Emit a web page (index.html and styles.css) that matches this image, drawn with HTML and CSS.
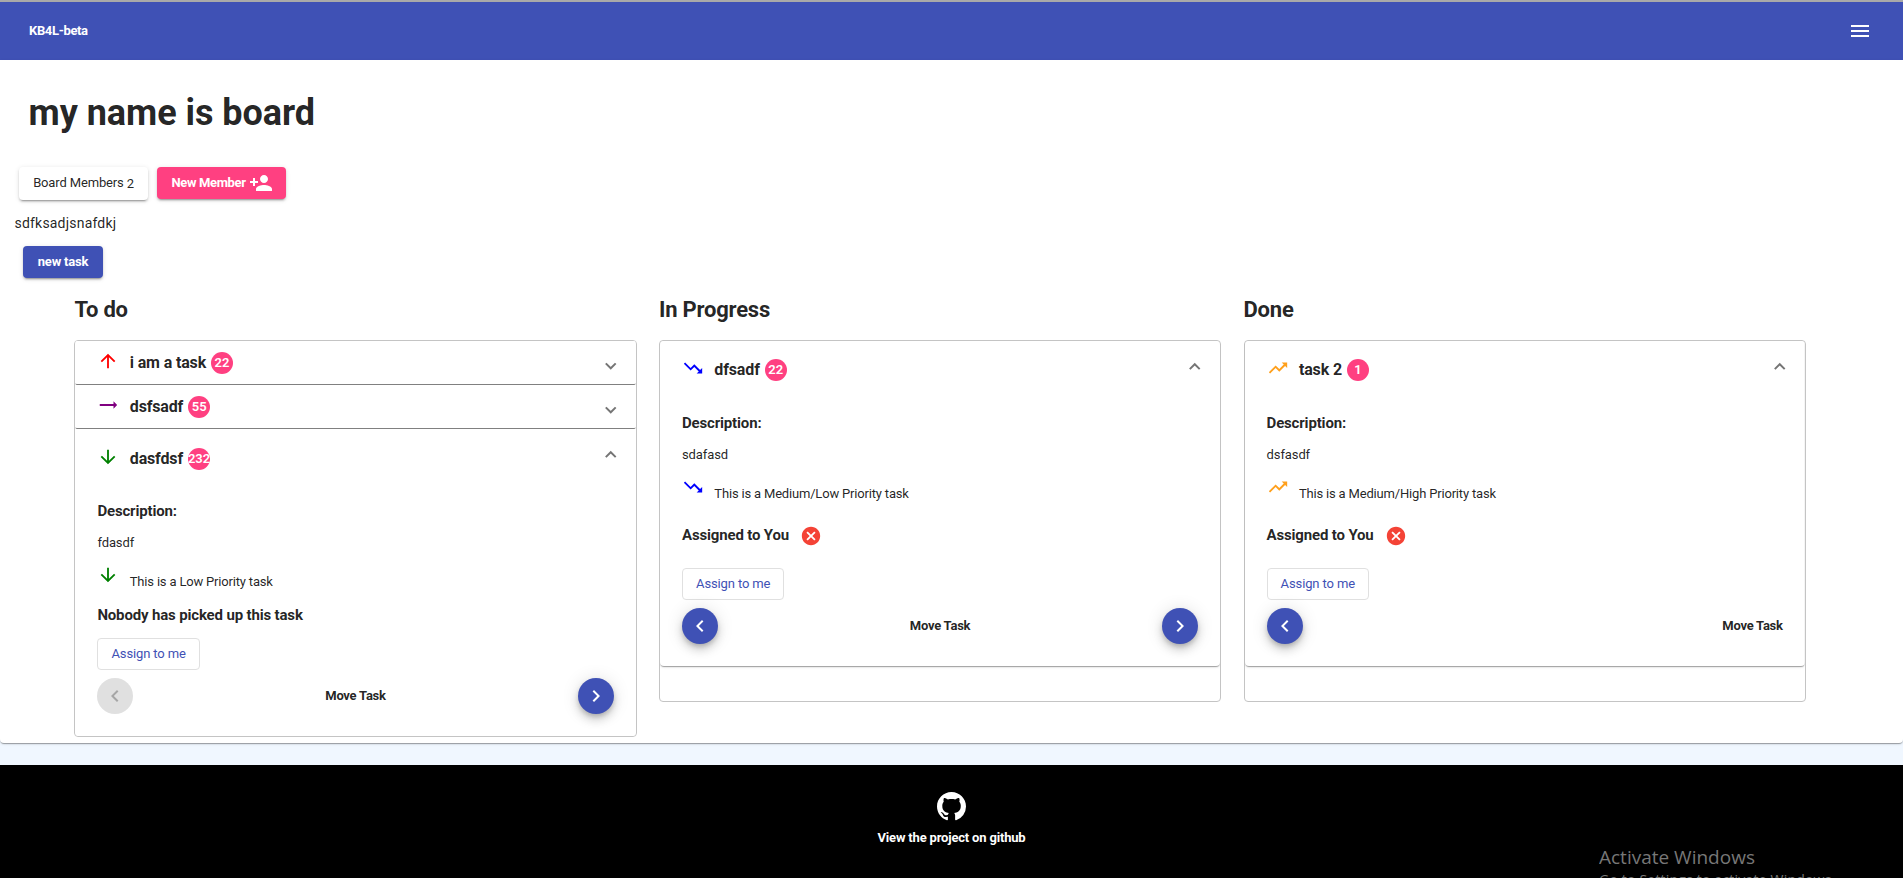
FILE: index.html
```html
<!DOCTYPE html>
<html lang="en">
<head>
<meta charset="utf-8">
<title>KB4L-beta</title>
<link rel="stylesheet" href="styles.css">
</head>
<body>
<svg class="sprite" width="0" height="0">
  <symbol id="up" viewBox="0 0 24 24"><path d="M4 12l1.41 1.41L11 7.83V20h2V7.83l5.58 5.59L20 12l-8-8-8 8z"/></symbol>
  <symbol id="down" viewBox="0 0 24 24"><path d="M20 12l-1.41-1.41L13 16.17V4h-2v12.17l-5.58-5.59L4 12l8 8 8-8z"/></symbol>
  <symbol id="flat" viewBox="0 0 24 24"><path d="M22 12l-4-4v3H3v2h15v3z"/></symbol>
  <symbol id="trend-down" viewBox="0 0 24 24"><path d="M16 18l2.29-2.29-4.88-4.88-4 4L2 7.41 3.41 6l6 6 4-4 6.3 6.29L22 12v6z"/></symbol>
  <symbol id="trend-up" viewBox="0 0 24 24"><path d="M16 6l2.29 2.29-4.88 4.88-4-4L2 16.59 3.41 18l6-6 4 4 6.3-6.29L22 12V6z"/></symbol>
  <symbol id="left" viewBox="0 0 24 24"><path d="M15.41 7.41L14 6l-6 6 6 6 1.41-1.41L10.83 12z"/></symbol>
  <symbol id="right" viewBox="0 0 24 24"><path d="M8.59 16.59L13.17 12 8.59 7.41 10 6l6 6-6 6z"/></symbol>
  <symbol id="cancel" viewBox="0 0 24 24"><path d="M12 2C6.47 2 2 6.47 2 12s4.47 10 10 10 10-4.47 10-10S17.53 2 12 2zm5 13.59L15.59 17 12 13.41 8.41 17 7 15.59 10.59 12 7 8.41 8.41 7 12 10.59 15.59 7 17 8.41 13.41 12 17 15.59z"/></symbol>
</svg>

<header class="toolbar">
  <span class="brand">KB4L-beta</span>
  <svg class="icon24" viewBox="0 0 24 24"><path d="M3 18h18v-2H3v2zm0-5h18v-2H3v2zm0-7v2h18V6H3z"/></svg>
</header>

<main class="board">
  <h1 class="board-title">my name is board</h1>
  <div class="actions">
    <button class="btn btn-plain">Board Members <span class="count">2</span></button>
    <button class="btn btn-accent">New Member <svg class="icon24" viewBox="0 0 24 24"><path d="M15 12c2.21 0 4-1.79 4-4s-1.79-4-4-4-4 1.79-4 4 1.79 4 4 4zm-9-2V7H4v3H1v2h3v3h2v-3h3v-2H6zm9 4c-2.67 0-8 1.34-8 4v2h16v-2c0-2.66-5.33-4-8-4z"/></svg></button>
  </div>
  <p class="board-desc">sdfksadjsnafdkj</p>
  <button class="btn btn-primary">new task</button>

  <div class="columns">
    <section class="column">
      <h2 class="column-title">To do</h2>
      <div class="list">
        <article class="task">
          <div class="task-head"><svg class="prio red"><use href="#up"/></svg><h3 class="task-title">i am a task</h3><span class="badge">22</span><i class="chev"></i></div>
        </article>
        <article class="task">
          <div class="task-head"><svg class="prio purple"><use href="#flat"/></svg><h3 class="task-title">dsfsadf</h3><span class="badge">55</span><i class="chev"></i></div>
        </article>
        <article class="task open">
          <div class="task-head"><svg class="prio green"><use href="#down"/></svg><h3 class="task-title">dasfdsf</h3><span class="badge">232</span><i class="chev"></i></div>
          <div class="task-body">
            <h4 class="label">Description:</h4>
            <p class="text">fdasdf</p>
            <div class="prio-row"><svg class="prio green"><use href="#down"/></svg><span class="prio-text">This is a Low Priority task</span></div>
            <h4 class="label nobody">Nobody has picked up this task</h4>
            <button class="assign">Assign to me</button>
            <div class="move"><span class="fab disabled"><svg class="icon24"><use href="#left"/></svg></span><b>Move Task</b><span class="fab"><svg class="icon24"><use href="#right"/></svg></span></div>
          </div>
        </article>
      </div>
    </section>

    <section class="column">
      <h2 class="column-title">In Progress</h2>
      <div class="list spare">
        <article class="task open">
          <div class="task-head"><svg class="prio blue"><use href="#trend-down"/></svg><h3 class="task-title">dfsadf</h3><span class="badge">22</span><i class="chev"></i></div>
          <div class="task-body">
            <h4 class="label">Description:</h4>
            <p class="text">sdafasd</p>
            <div class="prio-row"><svg class="prio blue"><use href="#trend-down"/></svg><span class="prio-text">This is a Medium/Low Priority task</span></div>
            <div class="assigned"><h4 class="label">Assigned to You</h4><svg class="cancel"><use href="#cancel"/></svg></div>
            <button class="assign">Assign to me</button>
            <div class="move"><span class="fab"><svg class="icon24"><use href="#left"/></svg></span><b>Move Task</b><span class="fab"><svg class="icon24"><use href="#right"/></svg></span></div>
          </div>
        </article>
      </div>
    </section>

    <section class="column">
      <h2 class="column-title">Done</h2>
      <div class="list spare">
        <article class="task open">
          <div class="task-head"><svg class="prio orange"><use href="#trend-up"/></svg><h3 class="task-title">task 2</h3><span class="badge">1</span><i class="chev"></i></div>
          <div class="task-body">
            <h4 class="label">Description:</h4>
            <p class="text">dsfasdf</p>
            <div class="prio-row"><svg class="prio orange"><use href="#trend-up"/></svg><span class="prio-text">This is a Medium/High Priority task</span></div>
            <div class="assigned"><h4 class="label">Assigned to You</h4><svg class="cancel"><use href="#cancel"/></svg></div>
            <button class="assign">Assign to me</button>
            <div class="move"><span class="fab"><svg class="icon24"><use href="#left"/></svg></span><b>Move Task</b></div>
          </div>
        </article>
      </div>
    </section>
  </div>
</main>

<footer class="footer">
  <svg class="github" viewBox="0 0 16 16"><path d="M8 0C3.58 0 0 3.58 0 8c0 3.54 2.29 6.53 5.47 7.59.4.07.55-.17.55-.38 0-.19-.01-.82-.01-1.49-2.01.37-2.53-.49-2.69-.94-.09-.23-.48-.94-.82-1.13-.28-.15-.68-.52-.01-.53.63-.01 1.08.58 1.23.82.72 1.21 1.87.87 2.33.66.07-.52.28-.87.51-1.07-1.78-.2-3.64-.89-3.64-3.95 0-.87.31-1.59.82-2.15-.08-.2-.36-1.02.08-2.12 0 0 .67-.21 2.2.82.64-.18 1.32-.27 2-.27s1.36.09 2 .27c1.53-1.04 2.2-.82 2.2-.82.44 1.1.16 1.92.08 2.12.51.56.82 1.27.82 2.15 0 3.07-1.87 3.75-3.65 3.95.29.25.54.73.54 1.48 0 1.07-.01 1.93-.01 2.2 0 .21.15.46.55.38A8.01 8.01 0 0016 8c0-4.42-3.58-8-8-8z"/></svg>
  <span class="footer-text">View the project on github</span>
</footer>
<aside class="watermark"><div class="wm-title">Activate Windows</div><div class="wm-sub">Go to Settings to activate Windows.</div></aside>
</body>
</html>
```
FILE: styles.css
```css
* { box-sizing: border-box; }
html, body { height: 100%; }
body {
  margin: 0;
  overflow: hidden;
  display: flex;
  flex-direction: column;
  background: #f0f7ff;
  font: 400 14px/20px Roboto, sans-serif;
  color: rgba(0, 0, 0, .87);
}
h1, h2, h3, h4, p { margin: 0; }
button { font-family: inherit; }
svg { fill: currentColor; flex: none; }
.sprite { position: absolute; }
.icon24 { width: 24px; height: 24px; }

.toolbar {
  flex: none;
  height: 60px;
  border-top: 2px solid #a9a9a9;
  padding: 0 31px 0 29px;
  display: flex;
  align-items: center;
  justify-content: space-between;
  background: #3f51b5;
  color: #fff;
}
.brand { font-size: 13px; font-weight: 700; letter-spacing: -.35px; }

.board {
  flex: none;
  height: 683px;
  background: #fff;
  border-radius: 0 0 4px 4px;
  box-shadow: 0 2px 1px -1px rgba(0, 0, 0, .2), 0 1px 1px rgba(0, 0, 0, .14), 0 1px 3px rgba(0, 0, 0, .12);
}
.board-title { padding: 32px 0 0 28.6px; font-size: 36px; line-height: 43px; font-weight: 700; letter-spacing: -.05px; }
.actions { display: flex; gap: 9px; padding: 32px 0 0 19px; }
.btn {
  display: flex;
  align-items: center;
  justify-content: center;
  height: 32px;
  padding: 0 0 1px;
  border: 0;
  border-radius: 4px;
  font-size: 13px;
  font-weight: 700;
  letter-spacing: -.2px;
  white-space: pre;
  color: #fff;
  box-shadow: 0 3px 1px -2px rgba(0, 0, 0, .2), 0 2px 2px rgba(0, 0, 0, .14), 0 1px 5px rgba(0, 0, 0, .12);
}
.btn-plain { width: 129px; height: 33px; padding-bottom: 3px; background: #fff; color: rgba(0, 0, 0, .87); font-weight: 400; letter-spacing: -.15px; }
.count { padding-top: 2px; }
.btn-accent { width: 129px; padding-left: 1px; background: #ff4081; letter-spacing: -.35px; }
.btn-accent .icon24 { margin-top: 1px; }
.btn-primary { width: 80px; margin-left: 23px; background: #3f51b5; }
.board-desc { padding: 13px 0 13px 14.5px; font-size: 14px; letter-spacing: .2px; }

.columns { display: flex; align-items: flex-start; gap: 22.4px; padding: 20px 0 0 74.4px; }
.column { width: 562.2px; }
.column-title { height: 42px; font-size: 22px; line-height: 24px; font-weight: 700; letter-spacing: -.22px; }
.list { border: 1px solid #c4c4c4; border-radius: 4px; }
.spare { padding-bottom: 35px; }
.task {
  border-radius: 4px;
  box-shadow: 0 2px 1px -1px rgba(0, 0, 0, .2), 0 1px 1px rgba(0, 0, 0, .14), 0 1px 3px rgba(0, 0, 0, .12);
  background: #fff;
  clip-path: inset(0 0 -4px 0);
}
.task:not(.open) { border-bottom: 1px solid #808080; border-radius: 2px; box-shadow: none; }
.list:not(.spare) .open { box-shadow: none; }
.task-head { display: flex; align-items: center; height: 43px; padding: 0 22px; }
.open .task-head { height: 59px; margin-bottom: -1px; }
.spare .task-head { height: 58px; margin-bottom: 0; }
.prio { width: 22px; height: 22px; margin: -4px 10.4px 0 0; }
.task-title { font-size: 16px; font-weight: 700; letter-spacing: -.15px; }
.badge {
  display: flex;
  align-items: center;
  justify-content: center;
  width: 22px;
  height: 22px;
  margin-left: 5px;
  border-radius: 50%;
  background: #ff4081;
  color: #fff;
  font-size: 13px;
  font-weight: 600;
}
.chev {
  width: 7.5px;
  height: 7.5px;
  margin: 3px -.5px 0 auto;
  border: solid rgba(0, 0, 0, .54);
  border-width: 0 2px 2px 0;
  transform: rotate(45deg);
}
.open .chev { transform: rotate(225deg); margin-top: -3px; }
.red { color: red; }
.purple { color: purple; }
.green { color: green; }
.blue { color: blue; }
.orange { color: #ffa01c; }

.task-body { padding: 14px 22px 22px; }
.label { font-size: 15px; line-height: 20px; font-weight: 700; letter-spacing: -.16px; }
.text { margin-top: 12px; font-size: 13px; line-height: 20px; letter-spacing: -.1px; }
.prio-row { display: flex; height: 22px; margin-top: 12px; }
.prio-row .prio { margin-top: -1px; }
.prio-text { padding-top: 7px; font-size: 13px; letter-spacing: -.18px; }
.nobody { margin-top: 18px; }
.assigned { display: flex; align-items: center; height: 22px; margin-top: 25px; }
.cancel { width: 22px; height: 22px; margin: 1px 0 0 11px; color: #f44336; }
.assign {
  display: block;
  width: 102.5px;
  height: 32px;
  margin-top: 13px;
  padding: 0 0 2px;
  border: 1px solid #e0e0e0;
  border-radius: 4px;
  background: #fff;
  color: #3f51b5;
  font-size: 13px;
  letter-spacing: -.12px;
}
.assigned + .assign { margin-top: 22px; }
.move { display: flex; align-items: center; justify-content: space-between; margin-top: 8px; height: 36px; font-size: 13px; letter-spacing: -.25px; }
.move b { font-weight: 700; }
.fab {
  display: flex;
  align-items: center;
  justify-content: center;
  width: 36px;
  height: 36px;
  border-radius: 50%;
  background: #3f51b5;
  color: #fff;
  box-shadow: 0 3px 5px -1px rgba(0, 0, 0, .2), 0 6px 10px rgba(0, 0, 0, .14), 0 1px 18px rgba(0, 0, 0, .12);
}
.fab.disabled { background: #e0e0e0; color: #a6a6a6; box-shadow: none; }

.footer {
  flex: 1;
  margin-top: 22px;
  padding-top: 27px;
  display: flex;
  flex-direction: column;
  align-items: center;
  background: #000;
  color: #fff;
}
.github { width: 29px; height: 29px; }
.footer-text { margin-top: 7px; font-size: 13px; font-weight: 700; letter-spacing: -.18px; }
.watermark {
  position: absolute;
  left: 1599px;
  top: 844px;
  height: 34px;
  overflow: hidden;
  font-family: "Open Sans", sans-serif;
  color: #777;
  white-space: nowrap;
}
.wm-title { font-size: 19px; line-height: 26px; }
.wm-sub { font-size: 14px; line-height: 20px; letter-spacing: .2px; }
```
